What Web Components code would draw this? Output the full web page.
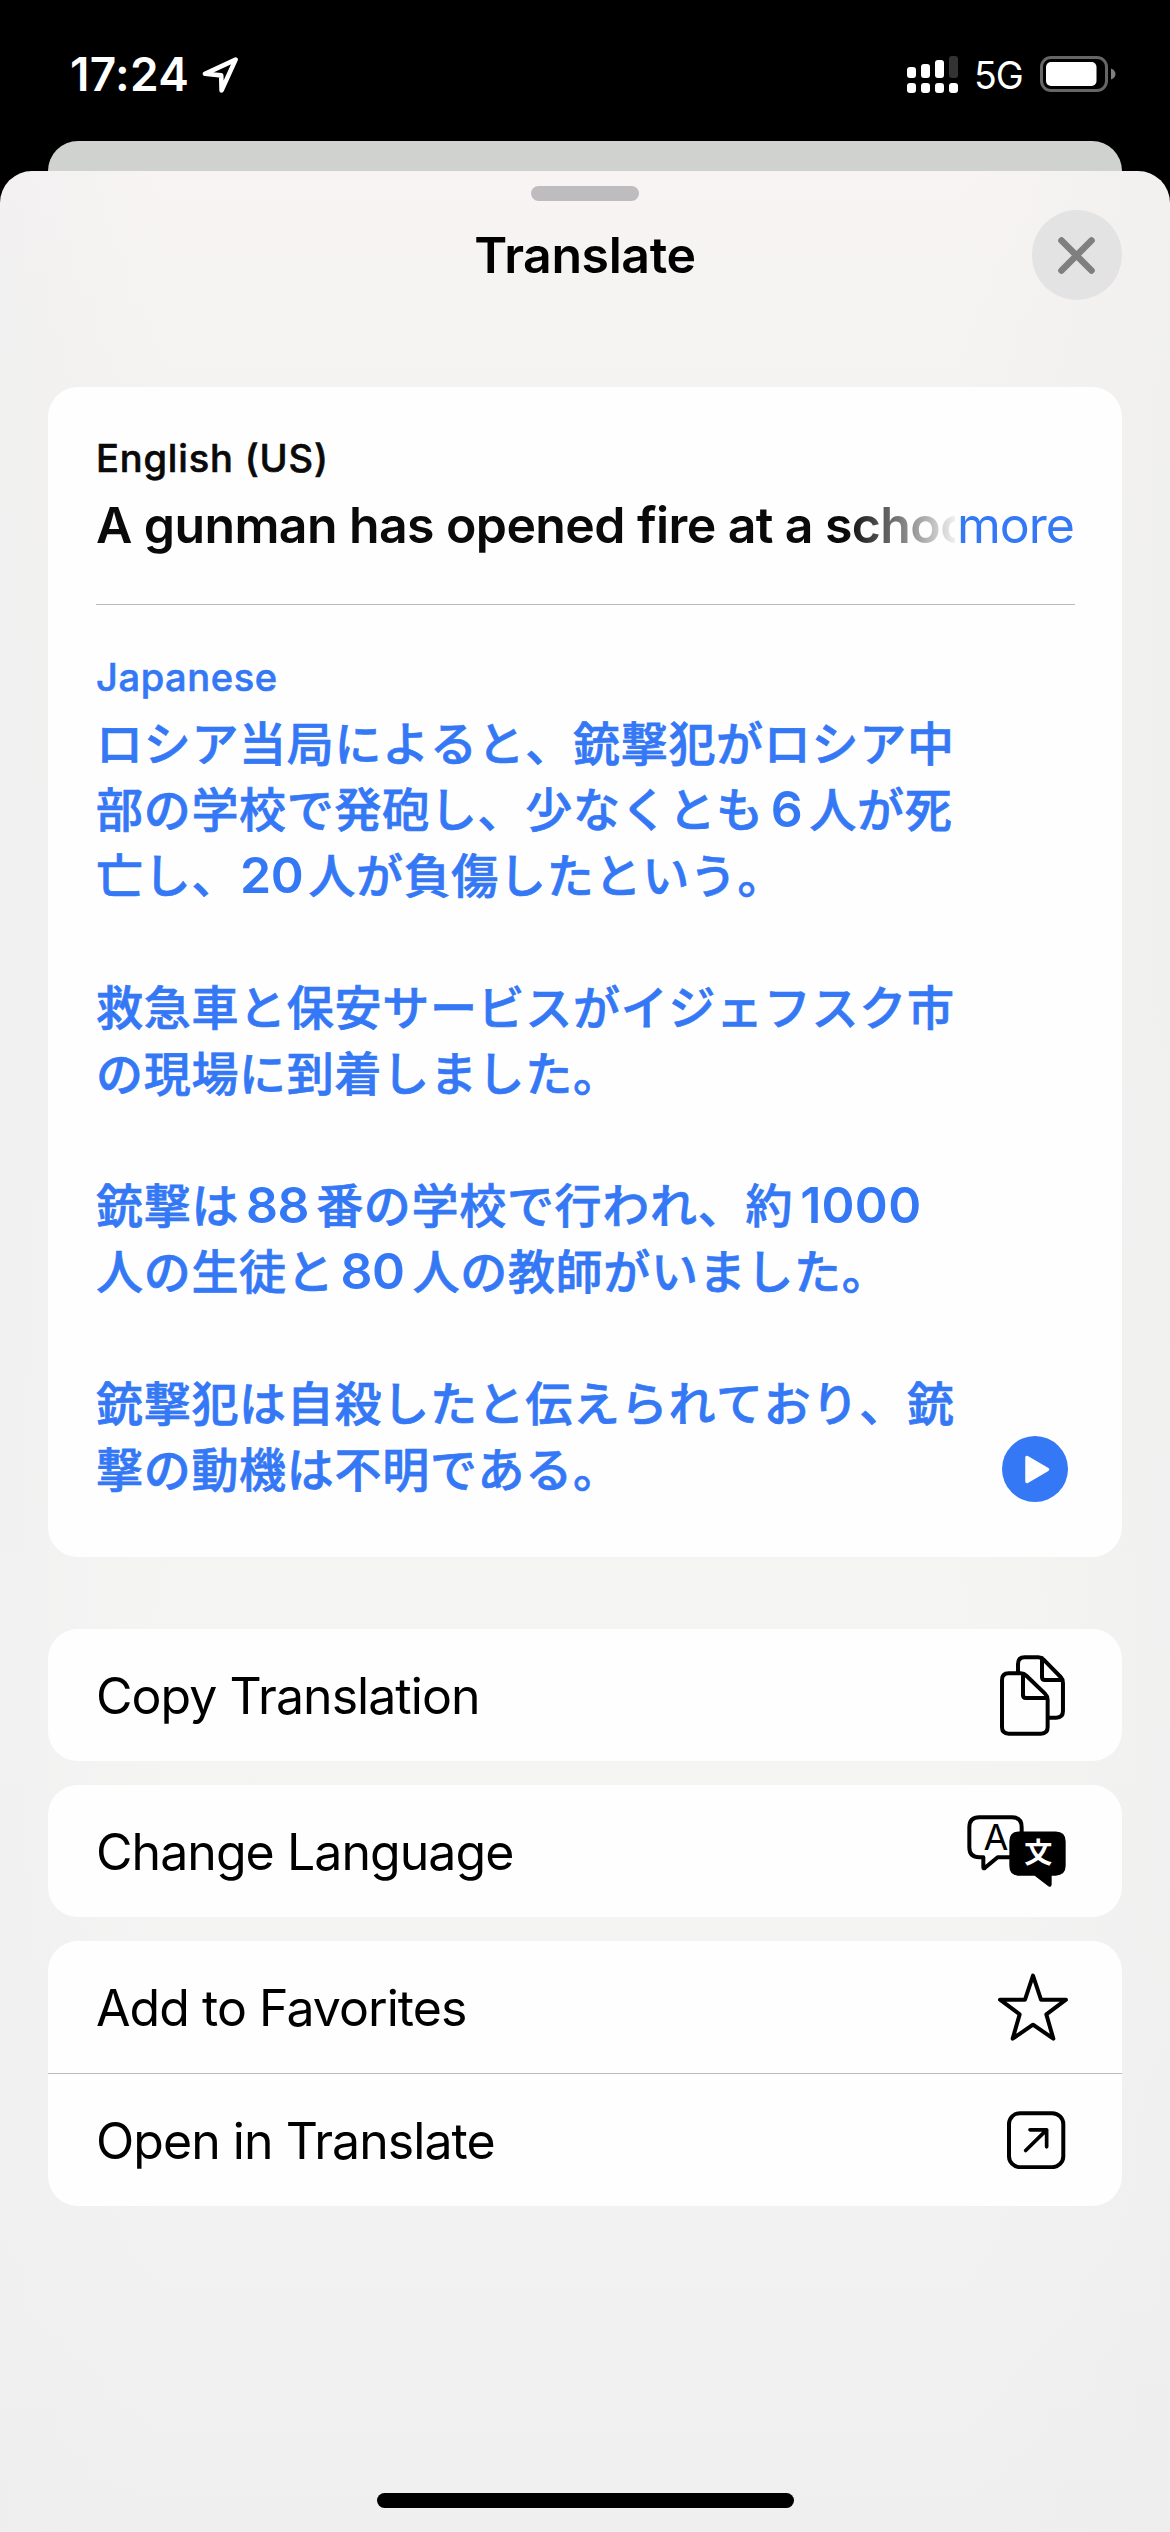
<!DOCTYPE html>
<html lang="en">
<head>
<meta charset="utf-8">
<title>Translate</title>
<style>
html,body{margin:0;padding:0;background:#000}
body{width:1170px;height:2532px;overflow:hidden;font-family:Inter,"Noto Sans CJK JP",sans-serif;color:#000}
</style>
</head>
<body>
<phone-screen>
  <status-bar slot="status" time="17:24" network="5G"></status-bar>
  <translate-sheet heading="Translate">
    <translation-card>
      <span slot="source-lang">English (US)</span>
      <span slot="source">A gunman has opened fire at a school</span>
      <span slot="target-lang">Japanese</span>
      <jp-line>ロシア当局によると、銃撃犯がロシア中</jp-line>
      <jp-line>部の学校で発砲し、少なくとも<jp-num style="--l:7px;--r:7px">6</jp-num>人が死</jp-line>
      <jp-line>亡し、<jp-num style="--l:1px;--r:5px">20</jp-num>人が負傷したという。</jp-line>
      <jp-line></jp-line>
      <jp-line>救急車と保安サービスがイジェフスク市</jp-line>
      <jp-line>の現場に到着しました。</jp-line>
      <jp-line></jp-line>
      <jp-line>銃撃は<jp-num style="--l:7px;--r:7px">88</jp-num>番の学校で行われ、約<jp-num style="--l:7px;--r:0px;letter-spacing:.3px">1000</jp-num></jp-line>
      <jp-line>人の生徒と<jp-num style="--l:6px;--r:8px">80</jp-num>人の教師がいました。</jp-line>
      <jp-line></jp-line>
      <jp-line>銃撃犯は自殺したと伝えられており、銃</jp-line>
      <jp-line>撃の動機は不明である。</jp-line>
    </translation-card>
    <action-group slot="actions"><action-row icon="copy">Copy Translation</action-row></action-group>
    <action-group slot="actions"><action-row icon="language">Change Language</action-row></action-group>
    <action-group slot="actions"><action-row icon="star">Add to Favorites</action-row><action-row icon="open" divided>Open in Translate</action-row></action-group>
  </translate-sheet>
</phone-screen>
<script>
const define = (name, render) => customElements.define(name, class extends HTMLElement {
  constructor() { super(); this.attachShadow({mode: 'open'}); }
  connectedCallback() { this.shadowRoot.innerHTML = render(this).trim(); }
});

define('phone-screen', () => `
<style>
:host{display:flex;flex-direction:column;width:1170px;height:2532px;background:#000}
.behind{flex:none;height:30px;margin:0 48px;border-radius:32px 32px 0 0;background:#d0d2cf}
.fill{flex:1;display:flex}
</style>
<slot name="status"></slot><div class="behind"></div><div class="fill"><slot></slot></div>`);

define('status-bar', el => `
<style>
:host{display:flex;flex:none;height:141px;color:#fff;box-sizing:border-box;padding:56px 53px 0 70px;align-items:flex-start}
.time{font-size:46px;font-weight:600;line-height:37px;letter-spacing:.3px;width:132px;white-space:nowrap}
.grow{flex:1}
.net{font-size:37.5px;line-height:39px;width:66px;margin-left:16px;white-space:nowrap;letter-spacing:-1px}
svg{display:block;flex:none}
</style>
<span class="time">${el.getAttribute('time')}</span>
<svg width="38" height="38" viewBox="0 0 38 38" fill="none" stroke="#fff" stroke-width="4.6" stroke-linejoin="round" stroke-linecap="round"><path d="M33.6 3.600 3 17.800 19.2 19.400 19.600 34.400Z"/></svg>
<span class="grow"></span>
<svg width="51" height="38" viewBox="0 0 51 38" fill="#fff"><rect x="0" y="11" width="9" height="11" rx="3"/><rect x="14" y="8" width="9" height="14" rx="3"/><rect x="28" y="4" width="9" height="18" rx="3"/><rect x="42" y="0" width="9" height="22" rx="3" fill="#333"/><rect x="0" y="27" width="9" height="10" rx="3"/><rect x="14" y="27" width="9" height="10" rx="3"/><rect x="28" y="27" width="9" height="10" rx="3"/><rect x="42" y="27" width="9" height="10" rx="3"/></svg>
<span class="net">${el.getAttribute('network')}</span>
<svg width="77" height="36" viewBox="0 0 77 36"><rect x="1.5" y="1.5" width="65" height="33" rx="9.5" fill="none" stroke="#666" stroke-width="3"/><rect x="6" y="6" width="50.5" height="24" rx="5" fill="#fff"/><path d="M71 12.5Q75.5 14.500 75.5 18T71 23.500Z" fill="#808080"/></svg>`);

define('translate-sheet', el => `
<style>
:host{display:flex;flex:1;flex-direction:column;box-sizing:border-box;padding:0 48px;border-radius:32px 32px 0 0;
background:linear-gradient(90deg,rgba(238,238,239,.5),rgba(240,240,240,0) 14%,rgba(240,240,240,0) 82%,rgba(236,236,236,.45)),linear-gradient(#f7f4f3,#f4f3f1 9%,#f3f3f2 35%,#f5f5f4 65%,#f2f2f2 88%,#efefef)}
.grab{align-self:center;width:108px;height:15px;margin-top:15px;border-radius:8px;background:#bebcbf}
header{display:grid;grid-template-columns:90px 1fr 90px;align-items:center;height:90px;margin-top:9px}
h1{grid-column:2;margin:0;text-align:center;font-size:50px;font-weight:600;line-height:60px;letter-spacing:-.4px}
.close{display:block;width:90px;height:90px}
main{margin-top:87px}
.actions{display:flex;flex-direction:column;gap:24px;margin-top:72px}
.home{align-self:center;width:417px;height:15px;border-radius:8px;background:#000;margin-top:auto;margin-bottom:24px}
</style>
<div class="grab"></div>
<header><h1><span>${el.getAttribute('heading')}</span></h1>
<svg class="close" viewBox="0 0 90 90"><circle cx="45" cy="45" r="45" fill="#e4e3e4"/><path d="M29.500 30.500 59.500 60.500M59.500 30.500 29.500 60.500" stroke="#7f7f80" stroke-width="6.600" stroke-linecap="round"/></svg></header>
<main><slot></slot></main>
<div class="actions"><slot name="actions"></slot></div>
<div class="home"></div>`);

define('translation-card', () => `
<style>
:host{display:block;box-sizing:border-box;height:1170px;padding:45px 47px 0 48px;border-radius:30px;background:#fefefe;--blue:#3478f6}
.lang{font-size:38px;font-weight:500;line-height:52px;color:#0a0a0a;letter-spacing:.85px;-webkit-text-stroke:.6px}
.src{display:flex;margin-top:7px;line-height:68px;font-size:50px;white-space:nowrap}
.text{width:859px;overflow:hidden;font-weight:600;color:#0a0a0a;letter-spacing:-.6px;-webkit-mask:linear-gradient(90deg,#000 750px,transparent 866px)}
.more{color:var(--blue);margin-left:2px;letter-spacing:-1px}
hr{border:0;height:1px;margin:45px 0 46px;background:#bababc}
.lang.blue{color:var(--blue);letter-spacing:.6px}
.out{display:flex;justify-content:space-between;align-items:flex-end;color:var(--blue);margin-top:5px}
.play{flex:none;display:block;width:66px;height:66px;margin:0 7px -2px 0}
</style>
<div class="lang"><slot name="source-lang"></slot></div>
<div class="src"><div class="text"><slot name="source"></slot></div><span class="more">more</span></div>
<hr>
<div class="lang blue"><slot name="target-lang"></slot></div>
<div class="out"><div><slot></slot></div>
<svg class="play" viewBox="0 0 66 66"><circle cx="33" cy="33" r="33" fill="#3478f6"/><path d="M25 21.500V45.500L45.500 33.500Z" fill="#fff" stroke="#fff" stroke-width="3.500" stroke-linejoin="round"/></svg></div>`);

define('jp-line', () => `
<style>:host{display:block;height:66px;line-height:66px;white-space:nowrap;font-family:"Noto Sans CJK JP",sans-serif;font-size:47px;font-weight:500;letter-spacing:.7px;font-kerning:none;text-spacing-trim:space-all;-webkit-text-stroke:.7px}</style><slot></slot>`);

define('jp-num', () => `
<style>:host{font-family:Inter,sans-serif;font-size:50px;line-height:1;font-weight:600;letter-spacing:-.5px;-webkit-text-stroke:0;margin:0 var(--r) 0 var(--l)}</style><slot></slot>`);

define('action-group', () => `
<style>:host{display:block;border-radius:30px;background:#fefefe;overflow:hidden}</style><slot></slot>`);

const icons = {
copy: `<svg width="65.300" height="81" viewBox="210 106 196 243" stroke-width="12"><path d="M236 161H272Q282 161 290 169L345 222Q353 230 353 240V322Q353 342 333 342H236Q216 342 216 322V181Q216 161 236 161ZM279 163V226Q279 235 288 235H351M264 158V133Q264 113 284 113H325Q334 113 341 120L392 172Q399 179 399 190V274Q399 294 379 294H357M336 115V172Q336 181 345 181H397"/></svg>`,
language: `<svg width="99" height="72" viewBox="110 585.500 297 216" stroke-width="12"><path d="M274 636V622Q274 592 244 592H147Q117 592 117 622V682Q117 712 147 712H159V742Q159 748 164 744L202 712H240"/><text x="196" y="690" text-anchor="middle" font-family="Inter" font-size="108" font-weight="400" fill="#000" stroke="none">A</text><path d="M267 635H376Q406 635 406 665V738Q406 766 376 768H364V794Q363 804 354 799L313 768H267Q237 768 237 738V665Q237 635 267 635Z" fill="#000" stroke="none"/><text x="323" y="731" text-anchor="middle" font-family="Noto Sans CJK JP" font-size="84" font-weight="700" fill="#fff" stroke="none">文</text></svg>`,
star: `<svg width="70" height="69" viewBox="200 128 210 207" stroke-width="12" style="margin-right:-2px"><path d="M305 136 329 208H404L345 252 366 325 305 283 244 325 265 252 206 208H281Z"/></svg>`,
open: `<svg width="58.300" height="58.300" viewBox="231 545.500 175 175" stroke-width="12"><rect x="237" y="552" width="163" height="162" rx="33"/><path d="M287 664 350 602M300 602H350V653" stroke-width="11"/></svg>`
};
define('action-row', el => `
<style>
:host{display:flex;align-items:center;justify-content:space-between;box-sizing:border-box;height:132px;padding:0 56.500px 0 48px;font-size:50px;line-height:60px;letter-spacing:-.95px}
:host([divided]){height:133px;border-top:1px solid #bababc}
span{padding-top:2px}
svg{display:block;fill:none;stroke:#000;stroke-linecap:round;stroke-linejoin:round}
</style>
<span><slot></slot></span>${icons[el.getAttribute('icon')]}`);
</script>
</body>
</html>
